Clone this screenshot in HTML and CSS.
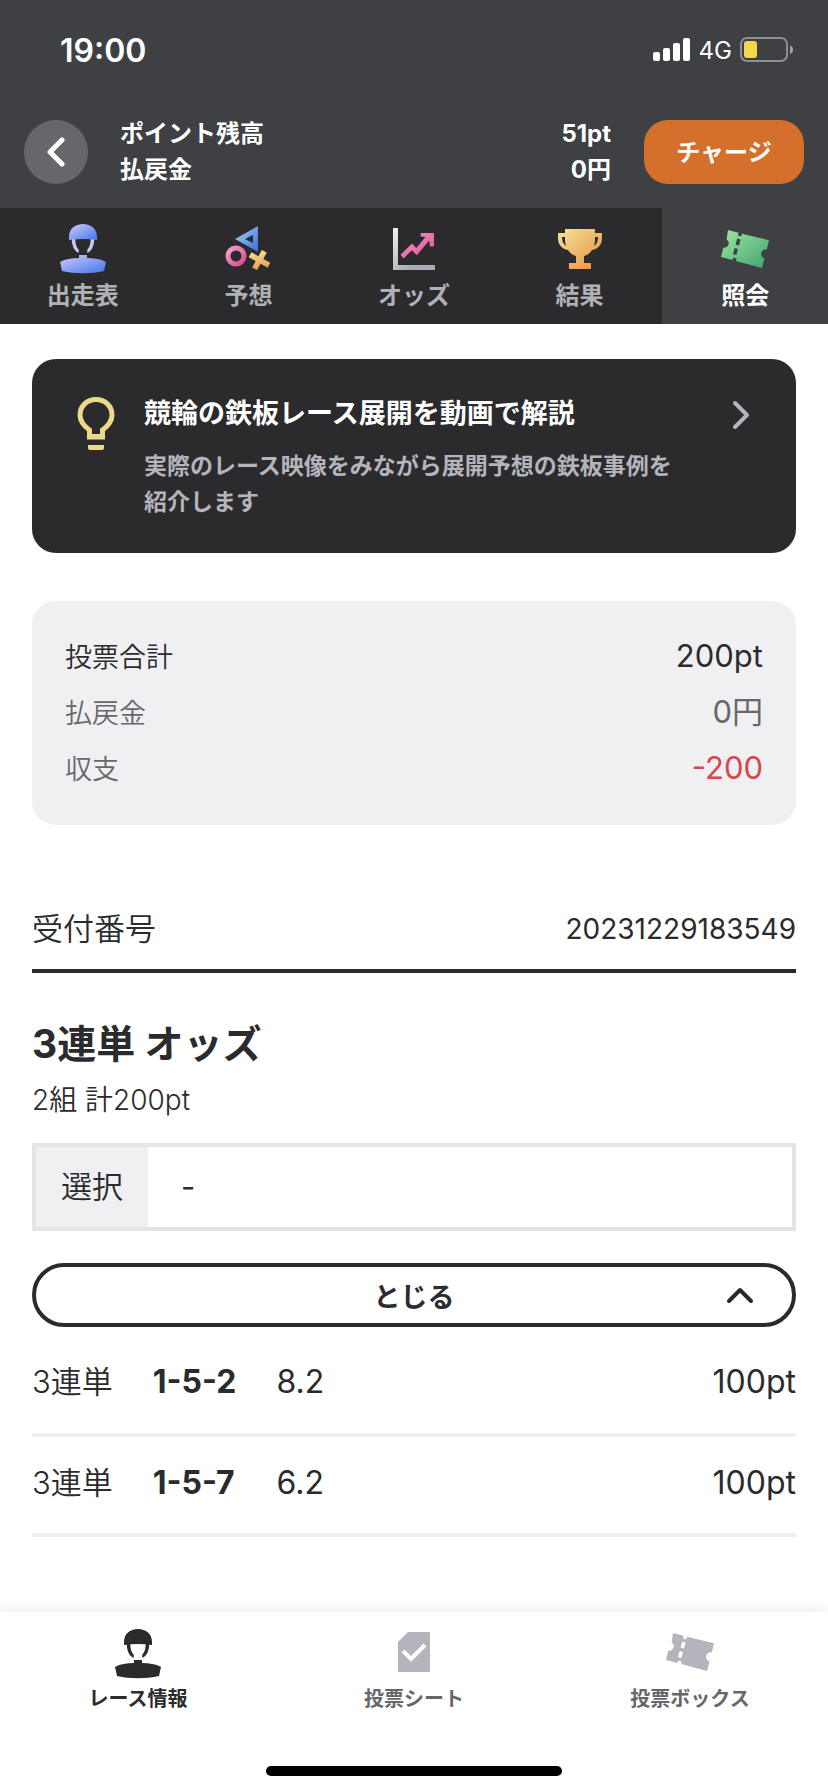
FILE: index.html
```html
<!DOCTYPE html>
<html lang="ja">
<head>
<meta charset="utf-8">
<meta name="viewport" content="width=device-width, initial-scale=1">
<title>照会</title>
<link rel="stylesheet" href="styles.css">
</head>
<body>
<div class="status">
  <span class="status-time">19:00</span>
  <div class="status-right">
    <svg width="38" height="24" viewBox="0 0 38 24" fill="#fff" aria-hidden="true"><rect x="0" y="14" width="7" height="9" rx="2"/><rect x="10" y="10" width="7" height="13" rx="2"/><rect x="20" y="5" width="7" height="18" rx="2"/><rect x="30" y="0" width="7" height="23" rx="2"/></svg>
    <span class="status-net">4G</span>
    <svg width="54" height="26" viewBox="0 0 54 26" aria-hidden="true"><rect x="1" y="1" width="46" height="23" rx="6" fill="none" stroke="#8d9092" stroke-width="2"/><rect x="4" y="4" width="13" height="17" rx="3" fill="#f6d64a"/><path d="M50 8.500a4.500 4.500 0 0 1 0 8.500z" fill="#a0a2a4"/></svg>
  </div>
</div>
<header class="header">
  <button class="back" type="button" aria-label="戻る">
    <svg width="20" height="32" viewBox="0 0 20 32" fill="none" stroke="#fff" stroke-width="5" stroke-linecap="round" stroke-linejoin="round" aria-hidden="true"><path d="M17 4 5 16l12 12"/></svg>
  </button>
  <dl class="balance">
    <dt>ポイント残高</dt><dd>51pt</dd>
    <dt>払戻金</dt><dd>0円</dd>
  </dl>
  <button class="charge" type="button">チャージ</button>
</header>
<nav class="tabs">
  <a class="tab" href="#">
    <svg width="48" height="50" viewBox="0 0 48 50" aria-hidden="true">
      <defs><linearGradient id="blue" x1="0" y1="0" x2="1" y2="1"><stop offset="0.100" stop-color="#c3c3fb"/><stop offset="0.850" stop-color="#5583ee"/></linearGradient></defs>
      <path d="M12.700 14C12.700 21 15 27 19.700 29V25.500C17.500 23.500 16.300 20 16.300 14zM35.300 14C35.300 21 33 27 28.300 29V25.500C30.500 23.500 31.700 20 31.700 14z" fill="#c9c9f8"/>
      <path d="M10 16V13C10 5 16 0 24 0s14 5 14 13v3q-14-2-28 0z" fill="url(#blue)"/>
      <path d="M20 31h8v3c7 0 14 1 19 4l-2 9c-13 3-29 3-42 0L1 38c5-3 12-4 19-4z" fill="url(#blue)"/>
    </svg>
    <span>出走表</span>
  </a>
  <a class="tab" href="#">
    <svg width="48" height="50" viewBox="0 0 48 50" aria-hidden="true">
      <defs>
        <linearGradient id="tri" x1="0" y1="0" x2="1" y2="1"><stop offset="0.200" stop-color="#94c3ee"/><stop offset="1" stop-color="#3c68dc"/></linearGradient>
        <linearGradient id="ring" x1="0" y1="0" x2="1" y2="1"><stop offset="0" stop-color="#f2a0c8"/><stop offset="1" stop-color="#d94b8f"/></linearGradient>
        <linearGradient id="cross" x1="0" y1="0" x2="1" y2="1"><stop offset="0.200" stop-color="#f7dc92"/><stop offset="1" stop-color="#e38a3a"/></linearGradient>
      </defs>
      <path fill-rule="evenodd" d="M11 15 34 2v26zM21 15l8 4v-8z" fill="url(#tri)"/>
      <circle cx="12" cy="32" r="8" fill="none" stroke="url(#ring)" stroke-width="5"/>
      <path transform="rotate(29 35.500 36)" d="M32.700 26h5.600v7.200h8v5.600h-8V46h-5.600v-7.200h-8v-5.600h8z" fill="url(#cross)"/>
    </svg>
    <span>予想</span>
  </a>
  <a class="tab" href="#">
    <svg width="48" height="50" viewBox="0 0 48 50" aria-hidden="true">
      <defs>
        <linearGradient id="axis" x1="0" y1="0" x2="1" y2="1"><stop offset="0" stop-color="#f2f2f4"/><stop offset="0.700" stop-color="#a9abb2"/></linearGradient>
        <linearGradient id="trend" x1="0" y1="0" x2="1" y2="1"><stop offset="0" stop-color="#f39ac6"/><stop offset="1" stop-color="#df4f94"/></linearGradient>
      </defs>
      <path d="M3 4h5v37h37v5H3z" fill="url(#axis)"/>
      <path d="M10.500 30.700 22 19.500l4.300 4.500L35.500 13 30.700 12.500V9H44v13.500h-4l-.8-6L26.800 31.300l-5-5-8.300 8.200z" fill="url(#trend)"/>
    </svg>
    <span>オッズ</span>
  </a>
  <a class="tab" href="#">
    <svg width="48" height="50" viewBox="0 0 48 50" aria-hidden="true">
      <defs><linearGradient id="gold" x1="0" y1="0" x2="1" y2="1"><stop offset="0" stop-color="#f8e39b"/><stop offset="1" stop-color="#e58e42"/></linearGradient></defs>
      <path fill-rule="evenodd" d="M9 5h30v4h7v5c0 7-4 11-10 12-2 3-4 5-8 6v7h7v6H13v-6h7v-7c-4-1-6-3-8-6C6 25 2 21 2 14V9h7zM9 13H6c0 4 1 7 4 9-1-3-1-6-1-9zM39 13h3c0 4-1 7-4 9 1-3 1-6 1-9z" fill="url(#gold)"/>
    </svg>
    <span>結果</span>
  </a>
  <a class="tab tab-active" href="#" aria-current="page">
    <svg width="48" height="50" viewBox="0 0 48 50" aria-hidden="true">
      <defs><linearGradient id="green" x1="0" y1="0" x2="1" y2="1"><stop offset="0" stop-color="#a0e89b"/><stop offset="1" stop-color="#3fa276"/></linearGradient></defs>
      <path fill-rule="evenodd" d="M7 6l10.500 2.700-.6 2.800 3.400.9.700-2.700L48 16.300l-2.300 9.200a4.500 4.500 0 0 0-2.200 8.800L41 44l-26-7 .7-2.600-3.400-.9L11.500 36 0 33l2.300-9.300a4.500 4.500 0 0 0 3.300-8.200zM16.200 14.500l-1.600 6.200 3.400.9 1.600-6.200zM13.600 24l-1.600 6.200 3.400.9 1.600-6.200z" fill="url(#green)"/>
    </svg>
    <span>照会</span>
  </a>
</nav>
<main class="main">
  <a class="tip" href="#">
    <svg class="tip-bulb" width="40" height="56" viewBox="0 0 40 56" fill="none" aria-hidden="true"><path d="M13.500 41v-7C8 30 4 25.500 4 19 4 10 11 3.500 20 3.500S36 10 36 19c0 6.500-4 11-9.500 15v7z" stroke="#ecd98a" stroke-width="5"/><path d="M12 38h16v5H12zM12 49h16v3q0 2-2 2H14q-2 0-2-2z" fill="#ecd98a"/></svg>
    <div class="tip-body">
      <strong class="tip-title">競輪の鉄板レース展開を動画で解説</strong>
      <span class="tip-text">実際のレース映像をみながら展開予想の鉄板事例を紹介します</span>
    </div>
    <svg class="tip-arrow" width="18" height="30" viewBox="0 0 18 30" fill="none" stroke="#b4b4bb" stroke-width="4" stroke-linecap="round" stroke-linejoin="round" aria-hidden="true"><path d="m3 3 12 12L3 27"/></svg>
  </a>
  <dl class="summary">
    <div class="summary-row summary-total"><dt>投票合計</dt><dd>200pt</dd></div>
    <div class="summary-row"><dt>払戻金</dt><dd>0円</dd></div>
    <div class="summary-row"><dt>収支</dt><dd class="loss">-200</dd></div>
  </dl>
  <div class="receipt"><span>受付番号</span><span class="receipt-no">20231229183549</span></div>
  <h1 class="bet-title">3連単 オッズ</h1>
  <p class="bet-count">2組 計200pt</p>
  <div class="choice"><span class="choice-label">選択</span><span class="choice-value">-</span></div>
  <button class="toggle" type="button" aria-expanded="true">
    <span class="toggle-text">とじる</span>
    <svg width="28" height="18" viewBox="0 0 28 18" fill="none" stroke="#2b2b2d" stroke-width="4" stroke-linecap="round" stroke-linejoin="round" aria-hidden="true"><path d="M3 15 14 4l11 11"/></svg>
  </button>
  <table class="bets">
    <tbody>
      <tr><td class="kind">3連単</td><td class="pick">1-5-2</td><td>8.2</td><td class="stake">100pt</td></tr>
      <tr><td class="kind">3連単</td><td class="pick">1-5-7</td><td>6.2</td><td class="stake">100pt</td></tr>
    </tbody>
  </table>
</main>
<footer class="dock">
  <nav class="dock-nav">
    <a class="dock-item dock-active" href="#">
      <svg width="48" height="50" viewBox="0 0 48 50" fill="#2b2b2d" aria-hidden="true">
        <path d="M12.700 14C12.700 21 15 27 19.700 29V25.500C17.500 23.500 16.300 20 16.300 14zM35.300 14C35.300 21 33 27 28.300 29V25.500C30.500 23.500 31.700 20 31.700 14z"/>
        <path d="M10 16V13C10 5 16 0 24 0s14 5 14 13v3q-14-2-28 0z"/>
        <path d="M20 31h8v3c7 0 14 1 19 4l-2 9c-13 3-29 3-42 0L1 38c5-3 12-4 19-4z"/>
      </svg>
      <span>レース情報</span>
    </a>
    <a class="dock-item" href="#">
      <svg width="48" height="50" viewBox="0 0 48 50" aria-hidden="true"><path d="M18 3h22v40H8V13z" fill="#b4b4bd"/><path d="m13 22 8 8 14-14" fill="none" stroke="#fff" stroke-width="4"/></svg>
      <span>投票シート</span>
    </a>
    <a class="dock-item" href="#">
      <svg width="48" height="50" viewBox="0 0 48 50" aria-hidden="true"><path transform="translate(0 -2)" fill-rule="evenodd" fill="#b4b4bd" d="M7 6l10.500 2.700-.6 2.800 3.400.9.700-2.700L48 16.300l-2.300 9.200a4.500 4.500 0 0 0-2.200 8.800L41 44l-26-7 .7-2.600-3.400-.9L11.500 36 0 33l2.300-9.300a4.500 4.500 0 0 0 3.300-8.200zM16.200 14.500l-1.600 6.200 3.400.9 1.600-6.200zM13.600 24l-1.600 6.200 3.400.9 1.600-6.200z"/></svg>
      <span>投票ボックス</span>
    </a>
  </nav>
  <div class="home-bar"></div>
</footer>
</body>
</html>
```
FILE: styles.css
```css
* { box-sizing: border-box; }
body {
  margin: 0;
  min-height: 100vh;
  display: flex;
  flex-direction: column;
  background: #fff;
  color: #2b2b2d;
  font-family: Inter, "Noto Sans CJK JP", sans-serif;
}
a { color: inherit; text-decoration: none; }
button { font-family: inherit; border: 0; padding: 0; cursor: pointer; }
svg { display: block; flex: none; }
dl, dd, h1, p { margin: 0; }

.status {
  display: flex;
  justify-content: space-between;
  align-items: center;
  height: 100px;
  padding: 0 34px 0 60px;
  background: #3f4044;
  color: #fff;
}
.status-time { font-size: 32px; font-weight: 600; }
.status-right { display: flex; align-items: center; gap: 8px; }
.status-net { font-size: 24px; }

.header {
  display: flex;
  align-items: center;
  height: 108px;
  padding: 4px 24px 8px;
  background: #3f4044;
  color: #fff;
}
.back {
  display: flex;
  align-items: center;
  justify-content: center;
  width: 64px;
  height: 64px;
  padding-right: 2px;
  border-radius: 50%;
  background: #66676b;
}
.balance {
  flex: 1;
  display: grid;
  grid-template-columns: 1fr auto;
  margin: 0 33px 0 32px;
  font-size: 24px;
  font-weight: 700;
  line-height: 36px;
}
.balance dd { text-align: right; }
.charge {
  width: 160px;
  height: 64px;
  padding-bottom: 4px;
  border-radius: 24px;
  background: #d4702c;
  color: #fff;
  font-size: 24px;
  font-weight: 700;
}

.tabs { display: flex; background: #2b2b2d; }
.tab {
  flex: 1;
  display: flex;
  flex-direction: column;
  align-items: center;
  height: 116px;
  padding-top: 16px;
  color: #b0b1b6;
  font-size: 24px;
  font-weight: 700;
  line-height: 44px;
}
.tab-active { background: #3f4044; color: #fff; }

.main { padding: 35px 32px 60px; }
.tip {
  display: flex;
  align-items: flex-start;
  padding: 37px 46px 33px 44px;
  border-radius: 24px;
  background: #2b2b2d;
}
.tip-bulb { margin-right: 28px; }
.tip-body { flex: 1; }
.tip-title { display: block; margin-bottom: 16px; color: #fff; font-size: 27px; line-height: 36px; }
.tip-text { display: block; max-width: 544px; color: #b4b4bb; font-size: 23px; font-weight: 700; line-height: 36px; }
.tip-arrow { margin-top: 4px; }

.summary {
  margin-top: 48px;
  padding: 27px 33px 29px;
  border-radius: 24px;
  background: #f0f0f3;
  color: #67676b;
}
.summary-row {
  display: flex;
  justify-content: space-between;
  align-items: baseline;
  height: 56px;
  font-size: 31px;
  line-height: 56px;
}
.summary-row dt { font-size: 27px; font-weight: 350; }
.summary-total { color: #2b2b2d; }
.summary .loss { color: #d8454b; }

.receipt {
  display: flex;
  justify-content: space-between;
  margin-top: 80px;
  padding-bottom: 16px;
  border-bottom: 4px solid #2b2b2d;
  font-size: 31px;
  font-weight: 350;
  line-height: 48px;
}
.receipt-no { font-size: 28px; font-weight: 400; }

.bet-title { margin-top: 43px; font-size: 39px; line-height: 56px; }
.bet-count { margin-top: 8px; font-size: 28px; font-weight: 350; line-height: 40px; }
.choice {
  display: flex;
  margin-top: 23px;
  border: 4px solid #e4e5e8;
  font-size: 31px;
  line-height: 80px;
}
.choice-label { padding: 0 25px; background: #f0f0f3; font-weight: 350; }
.choice-value { padding-left: 33px; }
.toggle {
  display: flex;
  align-items: center;
  width: 100%;
  height: 64px;
  margin-top: 32px;
  padding: 0 38px 0 66px;
  border: 4px solid #2b2b2d;
  border-radius: 32px;
  background: #fff;
  color: #2b2b2d;
}
.toggle-text { flex: 1; font-size: 27px; font-weight: 700; }

.bets { width: 100%; margin-top: 8px; border-collapse: collapse; font-size: 32px; }
.bets td { height: 100px; padding: 0 40px 4px 0; border-bottom: 4px solid #f0f0f3; line-height: 40px; white-space: nowrap; }
.bets .kind { font-size: 31px; font-weight: 350; }
.bets .pick { font-weight: 700; }
.bets .stake { width: 100%; padding-right: 0; text-align: right; }

.dock { margin-top: auto; background: #fff; box-shadow: 0 0 16px rgba(0, 0, 0, 0.1); }
.dock-nav { display: flex; }
.dock-item {
  flex: 1;
  display: flex;
  flex-direction: column;
  align-items: center;
  padding-top: 17px;
  color: #67676b;
  font-size: 20px;
  font-weight: 700;
  line-height: 40px;
}
.dock-active { color: #2b2b2d; }
.home-bar { width: 296px; height: 10px; margin: 47px auto 16px; border-radius: 5px; background: #000; }
```
